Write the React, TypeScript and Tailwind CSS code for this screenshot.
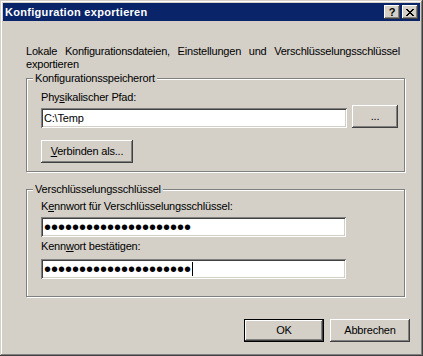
const raised =
  "shadow-[inset_-1px_-1px_#404040,inset_1px_1px_#ffffff,inset_-2px_-2px_#808080,inset_2px_2px_#d4d0c8]";
const sunken =
  "shadow-[inset_1px_1px_#808080,inset_-1px_-1px_#ffffff,inset_2px_2px_#404040,inset_-2px_-2px_#d4d0c8]";

function TitleButton({ children }: { children: React.ReactNode }) {
  return (
    <div className={`w-[16px] h-[14px] bg-[#d4d0c8] flex items-center justify-center ${raised}`}>
      {children}
    </div>
  );
}

function Group({
  title,
  className,
  children,
}: {
  title: string;
  className: string;
  children: React.ReactNode;
}) {
  return (
    <fieldset
      className={`w-[379px] border border-[#808080] pl-[14px] pr-[6px] shadow-[1px_1px_#ffffff,inset_1px_1px_#ffffff] ${className}`}
    >
      <legend className="-ml-[8px] px-[2px] bg-[#d4d0c8] leading-[13px]">{title}</legend>
      {children}
    </fieldset>
  );
}

export default function App() {
  return (
    <div className="w-[423px] h-[356px] bg-[#d4d0c8] flex flex-col font-['Liberation_Sans',Arial,sans-serif] text-[11px] text-black shadow-[inset_-1px_-1px_#404040,inset_1px_1px_#d4d0c8,inset_-2px_-2px_#808080,inset_2px_2px_#ffffff]">
      {/* Title bar */}
      <div className="mx-[3px] mt-[3px] h-[18px] bg-[#0a246a] flex items-center pl-[2px] pr-[2px]">
        <span className="flex-1 text-white font-bold tracking-[0.3px] leading-[18px]">
          Konfiguration exportieren
        </span>
        <div className="flex gap-[2px]">
          <TitleButton>
            <span className="font-bold text-[11px] leading-none">?</span>
          </TitleButton>
          <TitleButton>
            <svg width="8" height="7" viewBox="0 0 8 7" shapeRendering="crispEdges">
              <path d="M0 0h2v1h-2zM6 0h2v1h-2zM1 1h2v1h-2zM5 1h2v1h-2zM2 2h4v1h-4zM3 3h2v1h-2zM2 4h4v1h-4zM1 5h2v1h-2zM5 5h2v1h-2zM0 6h2v1h-2zM6 6h2v1h-2z" fill="#000" />
            </svg>
          </TitleButton>
        </div>
      </div>

      {/* Body */}
      <div className="pl-[26px] mt-[24px] tracking-[-0.2px]">
        <p className="w-[374px] text-justify leading-[13px]">
          Lokale Konfigurationsdateien, Einstellungen und Verschlüsselungsschlüssel exportieren
        </p>

        <Group title="Konfigurationsspeicherort" className="mt-[1px] pt-[6px] pb-[8px]">
          <div className="leading-[13px]">
            Phy<u>s</u>ikalischer Pfad:
          </div>
          <div className="mt-[1px] flex items-end gap-[5px]">
            <input
              readOnly
              value="C:\Temp"
              className={`w-[306px] h-[20px] bg-white px-[3px] outline-none ${sunken}`}
            />
            <button className={`w-[46px] h-[23px] bg-[#d4d0c8] leading-none ${raised}`}>...</button>
          </div>
          <button className={`mt-[12px] w-[92px] h-[23px] bg-[#d4d0c8] ${raised}`}>
            <u>V</u>erbinden als...
          </button>
        </Group>

        <Group title="Verschlüsselungsschlüssel" className="mt-[11px] pt-[4px] pb-[17px]">
          <div className="leading-[13px]">
            K<u>e</u>nnwort für Verschlüsselungsschlüssel:
          </div>
          <input
            type="password"
            readOnly
            value="xxxxxxxxxxxxxxxxxxxxx"
            className={`mt-[4px] block w-[305px] h-[20px] bg-white px-[3px] text-[20px] tracking-normal outline-none ${sunken}`}
          />
          <div className="mt-[3px] leading-[13px]">
            Kenn<u>w</u>ort bestätigen:
          </div>
          <div className="relative mt-[6px] w-[305px]">
            <input
              type="password"
              readOnly
              value="xxxxxxxxxxxxxxxxxxxxx"
              className={`block w-[305px] h-[20px] bg-white px-[3px] text-[20px] tracking-normal outline-none ${sunken}`}
            />
            <span className="absolute left-[151px] top-[3px] w-[1px] h-[14px] bg-black" />
          </div>
        </Group>

        <div className="mt-[22px] w-[384px] flex justify-end gap-[6px]">
          <button className={`w-[80px] h-[23px] bg-[#d4d0c8] border border-black ${raised}`}>OK</button>
          <button className={`w-[80px] h-[23px] bg-[#d4d0c8] ${raised}`}>Abbrechen</button>
        </div>
      </div>
    </div>
  );
}
